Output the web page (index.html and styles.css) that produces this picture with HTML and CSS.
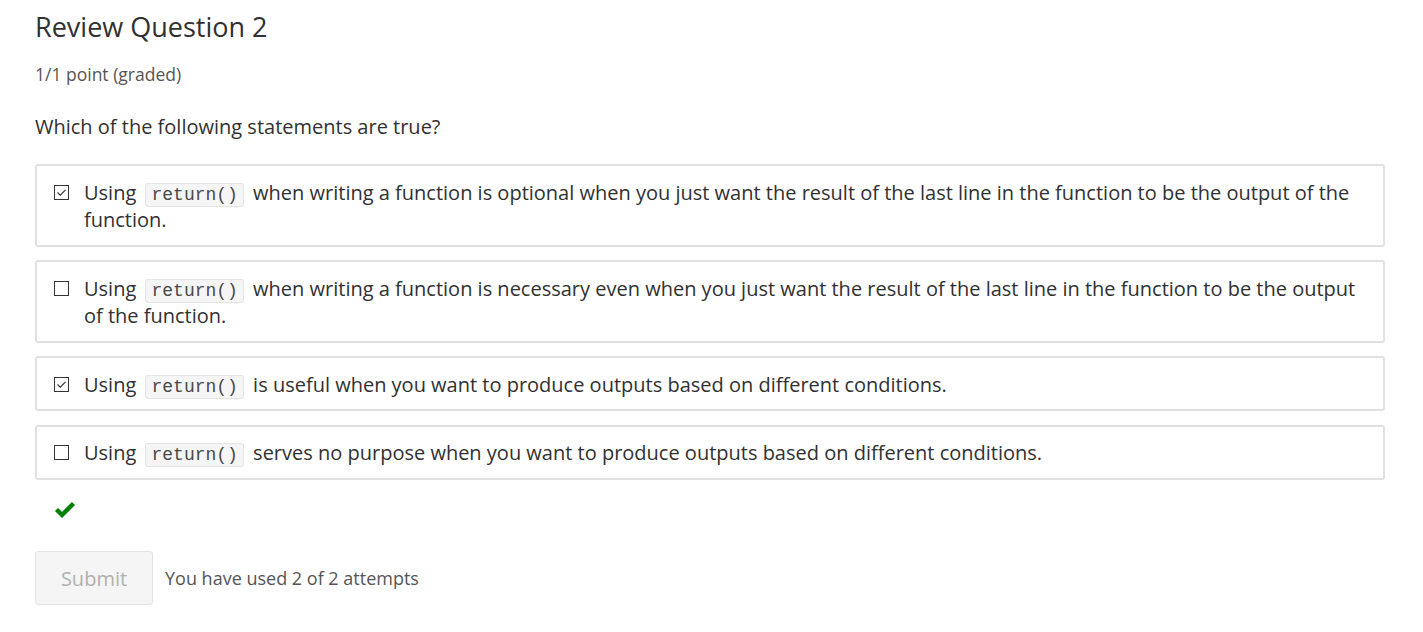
FILE: index.html
```html
<!DOCTYPE html>
<html>
<head>
<meta charset="utf-8">
<link rel="stylesheet" href="styles.css">
</head>
<body>
<div class="problem">
  <h2 class="title">Review Question 2</h2>
  <div class="points">1/1 point (graded)</div>
  <p class="prompt">Which of the following statements are true?</p>
  <div class="choices">
    <label class="choice">
      <span class="box"><svg viewBox="0 0 15 15" width="15" height="15"><path d="M3.5 7.5 L6.3 10.2 L11.5 4.8" fill="none" stroke="#333" stroke-width="1.2"/></svg></span>
      <span class="text">Using <code>return()</code> when writing a function is optional when you just want the result of the last line in the function to be the output of the function.</span>
    </label>
    <label class="choice">
      <span class="box"></span>
      <span class="text">Using <code>return()</code> when writing a function is necessary even when you just want the result of the last line in the function to be the output of the function.</span>
    </label>
    <label class="choice">
      <span class="box"><svg viewBox="0 0 15 15" width="15" height="15"><path d="M3.5 7.5 L6.3 10.2 L11.5 4.8" fill="none" stroke="#333" stroke-width="1.2"/></svg></span>
      <span class="text">Using <code>return()</code> is useful when you want to produce outputs based on different conditions.</span>
    </label>
    <label class="choice">
      <span class="box"></span>
      <span class="text">Using <code>return()</code> serves no purpose when you want to produce outputs based on different conditions.</span>
    </label>
  </div>
  <div class="status">
    <svg width="22" height="18" viewBox="0 0 22 18"><path d="M2.5 8.5 L8 14 L19.5 2.5" fill="none" stroke="#008100" stroke-width="4.4"/></svg>
  </div>
  <div class="actions">
    <button class="submit" disabled>Submit</button>
    <span class="attempts">You have used 2 of 2 attempts</span>
  </div>
</div>
</body>
</html>
```
FILE: styles.css
```css
html, body {
  margin: 0;
  padding: 0;
  background: #fff;
}
body {
  font-family: "Open Sans", "Noto Sans", sans-serif;
  color: #313131;
}
.problem {
  padding: 8px 38px 0 35px;
}
.title {
  font-size: 27px;
  font-weight: 400;
  margin: 0;
  line-height: 38px;
  color: #313131;
}
.points {
  font-size: 17.5px;
  color: #555;
  margin-top: 16px;
  line-height: 24px;
}
.prompt {
  font-size: 20px;
  margin: 27px 0 24px 0;
  line-height: 27px;
}
.choices {
  display: flex;
  flex-direction: column;
  gap: 13.5px;
}
.choice {
  display: flex;
  align-items: flex-start;
  border: 2px solid #e1e1e1;
  border-radius: 3px;
  padding: 12.5px 17px 11px 17px;
  font-size: 20px;
  line-height: 27.5px;
}
.box {
  flex: none;
  width: 15px;
  height: 15px;
  border: 1px solid #333;
  box-sizing: border-box;
  margin-top: 6px;
  margin-right: 15px;
  display: flex;
}
.box svg {
  margin: -1px;
}
code {
  font-family: "Liberation Mono", "Courier New", monospace;
  font-size: 18px;
  line-height: 1;
  background: #f5f5f5;
  border: 1px solid #e4e4e4;
  border-radius: 3px;
  padding: 1px 5px 1px 5px;
  margin: 0 4px;
  color: #4a4a4a;
}
.status {
  height: 32px;
  padding: 21.5px 0 0 19px;
}
.actions {
  display: flex;
  align-items: center;
  margin-top: 18px;
}
.submit {
  width: 118px;
  height: 54px;
  background: #f5f5f5;
  border: 1px solid #e4e4e4;
  border-radius: 3px;
  color: #b0b0b0;
  font-family: "Open Sans", sans-serif;
  font-size: 20px;
}
.attempts {
  margin-left: 12px;
  font-size: 18px;
  color: #555;
}
```
